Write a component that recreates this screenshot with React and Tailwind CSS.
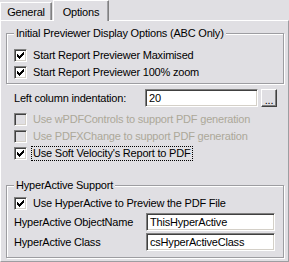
import React from 'react';

const CHECK = 'M0 2h1v3h-1zM1 3h1v3h-1zM2 4h1v3h-1zM3 3h1v3h-1zM4 2h1v3h-1zM5 1h1v3h-1zM6 0h1v3h-1z';

function Box({ checked, disabled }) {
  return (
    <span
      className={`w-[13px] h-[13px] shrink-0 flex items-center justify-center border border-t-[#808080] border-l-[#808080] border-b-white border-r-white shadow-[inset_1px_1px_0_#404040,inset_-1px_-1px_0_#d4d0c8] ${disabled ? 'bg-[#e0dfe3]' : 'bg-white'}`}
    >
      {checked && (
        <svg width="7" height="7" viewBox="0 0 7 7" shapeRendering="crispEdges">
          <path d={CHECK} fill={disabled ? '#aca899' : '#000'} />
        </svg>
      )}
    </span>
  );
}

function CheckRow({ label, checked, disabled, focused }) {
  return (
    <div className="flex items-center h-[17px] gap-[4px]">
      <Box checked={checked} disabled={disabled} />
      <span
        className={`whitespace-nowrap leading-[13px] px-[1px] border border-dotted ${focused ? 'border-black' : 'border-transparent'} ${disabled ? 'text-[#aca899]' : 'text-black'}`}
      >
        {label}
      </span>
    </div>
  );
}

function Edit({ value, width }) {
  return (
    <div
      className={`${width} h-[18px] bg-white flex items-center pl-[3px] border border-t-[#808080] border-l-[#808080] border-b-white border-r-white shadow-[inset_1px_1px_0_#404040,inset_-1px_-1px_0_#d4d0c8]`}
    >
      {value}
    </div>
  );
}

function Group({ title, children }) {
  return (
    <fieldset className="w-[278px] border border-[#9d9da1] shadow-[inset_1px_1px_0_white,1px_1px_0_white]">
      <legend className="ml-[7px] px-[2px] leading-[13px] bg-[#e0dfe3]">{title}</legend>
      {children}
    </fieldset>
  );
}

export default function App() {
  return (
    <div className="w-[289px] h-[262px] bg-[#e0dfe3] text-[11px] tracking-[-0.2px] text-black font-['Liberation_Sans',sans-serif] overflow-hidden">
      {/* tab strip */}
      <div className="flex items-end h-[20px] relative z-10">
        <div className="w-[52px] h-[18px] flex items-center justify-center pt-[1px] border-t border-l border-white border-r border-r-[#808080] shadow-[inset_-1px_0_0_#a0a0a4]">
          General
        </div>
        <div className="ml-[1px] w-[56px] h-[21px] -mb-px flex items-start justify-center pt-[3px] bg-[#e0dfe3] border-t border-l border-white border-r border-r-[#808080] shadow-[inset_-1px_0_0_#a0a0a4]">
          Options
        </div>
      </div>

      {/* tab page */}
      <div className="h-[242px] border-t border-l border-white border-r border-b border-r-[#9d9da1] border-b-[#9d9da1] pl-[5px]">
        <div className="mt-[6px]">
          <Group title="Initial Previewer Display Options (ABC Only)">
            <div className="pl-[7px] pt-[7px] pb-[2px]">
              <CheckRow label="Start Report Previewer Maximised" checked />
              <CheckRow label="Start Report Previewer 100% zoom" checked />
            </div>
          </Group>
        </div>

        <div className="flex items-center h-[18px] mt-[5px] pl-[8px]">
          <span className="w-[131px] whitespace-nowrap">Left column indentation:</span>
          <Edit value="20" width="w-[113px]" />
          <button className="ml-[3px] w-[16px] h-[18px] flex items-end justify-center pb-[2px] leading-[8px] border border-t-white border-l-white border-r-[#404040] border-b-[#404040] shadow-[inset_-1px_-1px_0_#808080]">
            ...
          </button>
        </div>

        <div className="mt-[4px] pl-[8px]">
          <CheckRow label="Use wPDFControls to support PDF generation" disabled />
          <CheckRow label="Use PDFXChange to support PDF generation" disabled />
          <CheckRow label="Use Soft Velocity's Report to PDF" checked focused />
        </div>

        <div className="mt-[17px]">
          <Group title="HyperActive Support">
            <div className="pl-[7px] pt-[3px] pb-[5px]">
              <CheckRow label="Use HyperActive to Preview the PDF File" checked />
              <div className="flex items-center h-[20px]">
                <span className="w-[132px] whitespace-nowrap">HyperActive ObjectName</span>
                <Edit value="ThisHyperActive" width="w-[129px]" />
              </div>
              <div className="flex items-center h-[20px]">
                <span className="w-[132px] whitespace-nowrap">HyperActive Class</span>
                <Edit value="csHyperActiveClass" width="w-[129px]" />
              </div>
            </div>
          </Group>
        </div>
      </div>
    </div>
  );
}
